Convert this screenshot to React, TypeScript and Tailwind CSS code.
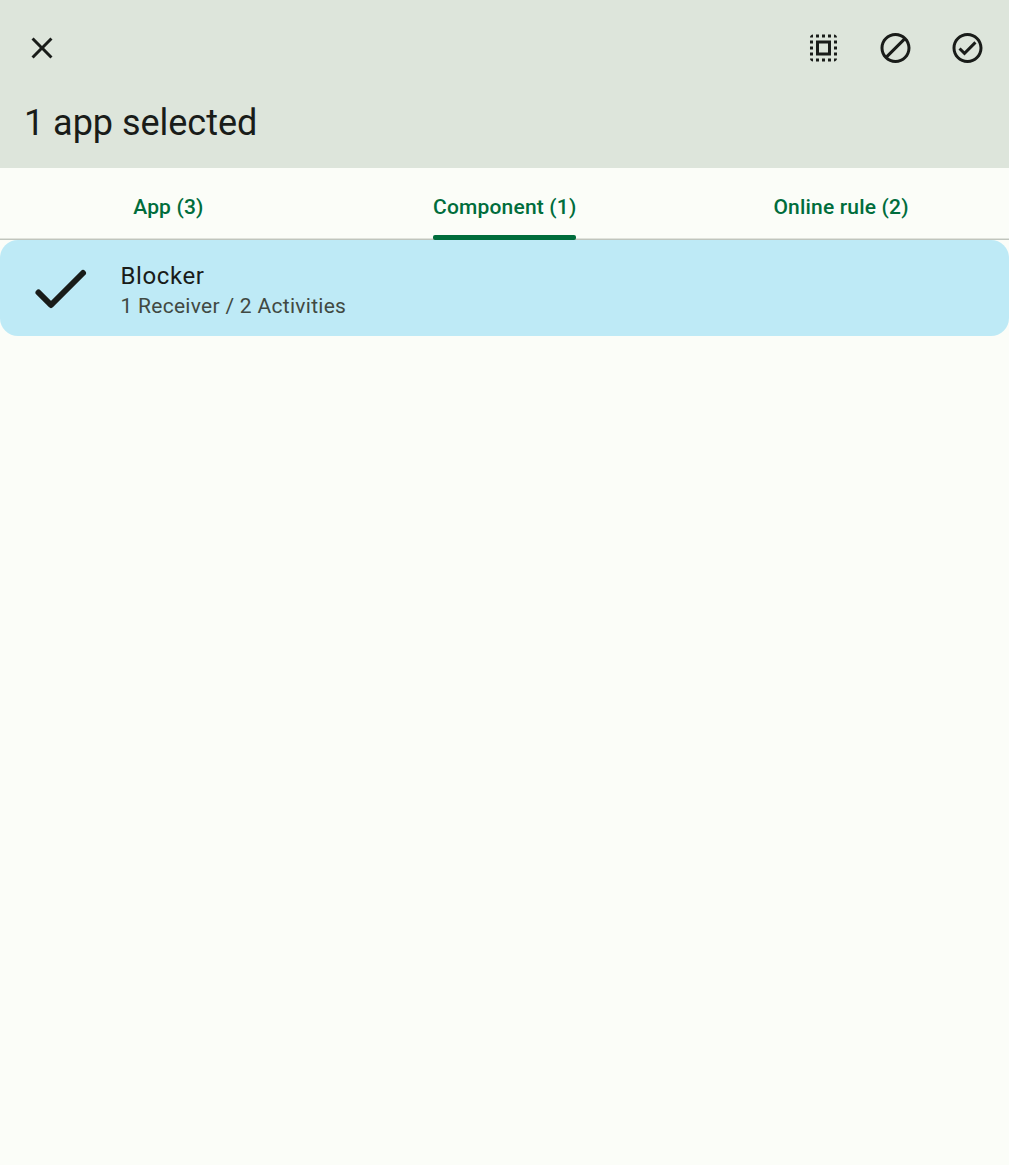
const ICON = "fill-[#191c19]";

function Tab({ label, active }: { label: string; active?: boolean }) {
  return (
    <button className="flex flex-1 flex-col items-center">
      <span className="flex h-[72px] flex-col justify-between whitespace-nowrap">
        <span className="pt-[24px] pl-[0.5px] text-[21px] leading-[30px] tracking-[0.18px]">{label}</span>
        <span className={active ? "h-[5px] rounded-[2px] bg-[#006d3c]" : "h-[5px]"} />
      </span>
    </button>
  );
}

export default function App() {
  return (
    <div className="flex h-[1165px] w-full flex-col bg-[#fbfdf8] font-['Roboto',sans-serif] text-[#191c19]">
      <header className="h-[168px] bg-[#dde5db]">
        <div className="flex h-[96px] items-center justify-between px-[24px]">
          <svg viewBox="0 0 24 24" className={`${ICON} size-[36px]`}>
            <path d="M19 6.41 17.59 5 12 10.59 6.41 5 5 6.41 10.59 12 5 17.59 6.41 19 12 13.41 17.59 19 19 17.59 13.41 12z" />
          </svg>
          <div className="flex gap-[36px]">
            <svg viewBox="-0.33 0 24 24" className={`${ICON} size-[36px]`}>
              <path d="M3 5h2V3c-1.1 0-2 .9-2 2zm0 8h2v-2H3v2zm4 8h2v-2H7v2zM3 9h2V7H3v2zm10-6h-2v2h2V3zm6 0v2h2c0-1.1-.9-2-2-2zM5 21v-2H3c0 1.1.9 2 2 2zm-2-4h2v-2H3v2zM9 3H7v2h2V3zm2 18h2v-2h-2v2zm8-8h2v-2h-2v2zm0 8c1.1 0 2-.9 2-2h-2v2zm0-12h2V7h-2v2zm0 8h2v-2h-2v2zm-4 4h2v-2h-2v2zm0-16h2V3h-2v2zM7 17h10V7H7v10zm2-8h6v6H9V9z" />
            </svg>
            <svg viewBox="-0.33 0 24 24" className={`${ICON} size-[36px]`}>
              <path d="M12 2C6.48 2 2 6.48 2 12s4.48 10 10 10 10-4.48 10-10S17.52 2 12 2zM4 12c0-4.42 3.58-8 8-8 1.85 0 3.55.63 4.9 1.69L5.69 16.9C4.63 15.55 4 13.85 4 12zm8 8c-1.85 0-3.55-.63-4.9-1.69L18.31 7.1C19.37 8.45 20 10.15 20 12c0 4.42-3.58 8-8 8z" />
            </svg>
            <svg viewBox="-0.33 0 24 24" className={`${ICON} size-[36px]`}>
              <path d="M12 2C6.48 2 2 6.48 2 12s4.48 10 10 10 10-4.48 10-10S17.52 2 12 2zm0 18c-4.41 0-8-3.59-8-8s3.59-8 8-8 8 3.59 8 8-3.59 8-8 8zm4.59-12.42L10 14.17l-2.59-2.58L6 13l4 4 8-8-1.41-1.42z" />
            </svg>
          </div>
        </div>
        <h1 className="pl-[24px] text-[36px] leading-[54px] tracking-[-0.03px]">1 app selected</h1>
      </header>
      <nav className="flex h-[72px] bg-[linear-gradient(to_top,#c0c5bd_1px,#e0e3dc_1px,#e0e3dc_2px,transparent_2px)] font-medium text-[#006d3c]">
        <Tab label="App (3)" />
        <Tab label="Component (1)" active />
        <Tab label="Online rule (2)" />
      </nav>
      <main>
        <div className="flex h-[96px] items-center rounded-[18px] bg-[#beeaf6]">
          <svg viewBox="0 0 60 60" className="ml-[30px] size-[60px]">
            <path d="M8.5 34.5 21 47 53 15" fill="none" stroke="#191c19" strokeWidth="6" strokeLinecap="round" strokeLinejoin="round" />
          </svg>
          <div className="ml-[30.4px] pt-[2px]">
            <div className="text-[24px] leading-[34px] tracking-[0.62px]">Blocker</div>
            <div className="text-[21px] leading-[26px] tracking-[0.29px] text-[#414942]">1 Receiver / 2 Activities</div>
          </div>
        </div>
      </main>
    </div>
  );
}
